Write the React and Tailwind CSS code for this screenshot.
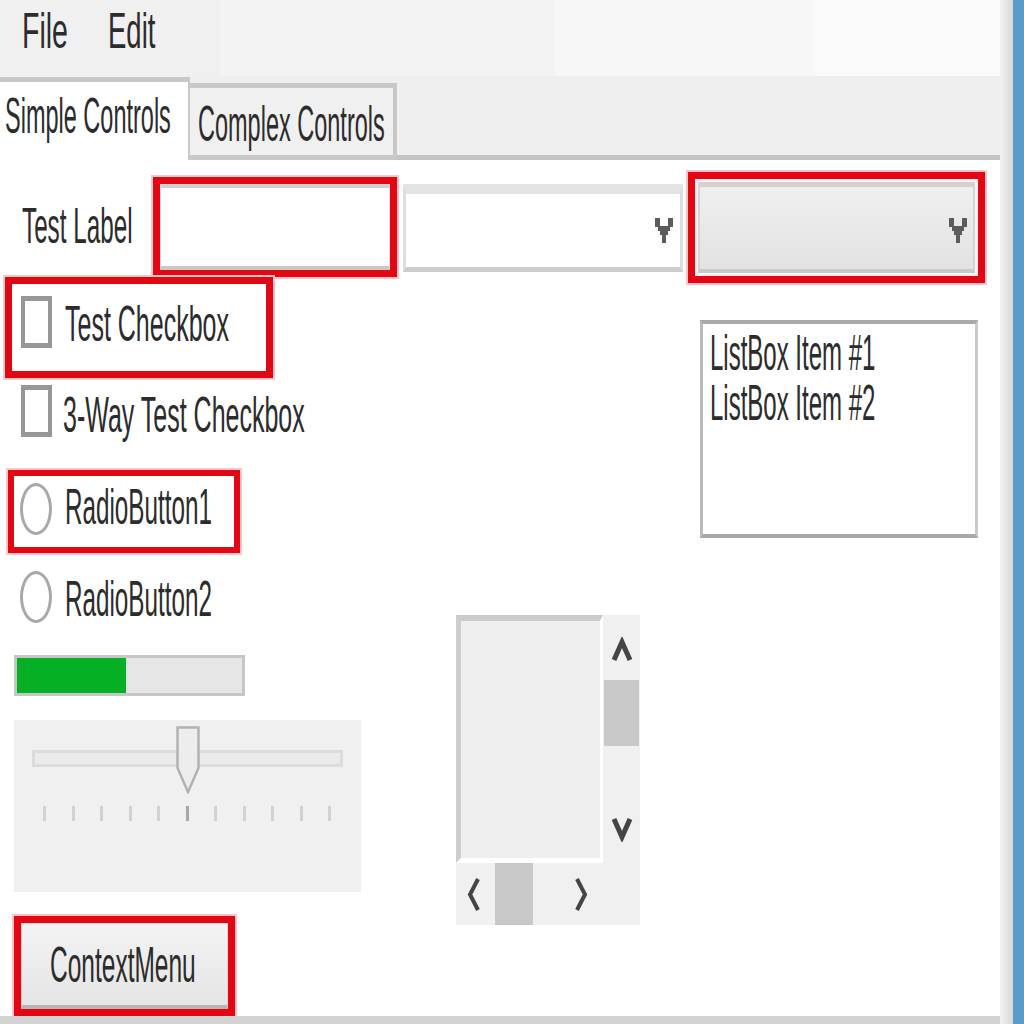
import React from 'react'

const FONT = { fontFamily: '"Liberation Sans", Arial, sans-serif' }

function Txt({ children, scale = 'scale-x-[0.49]' }) {
  return (
    <span className={`inline-block origin-left whitespace-nowrap text-[50px] leading-none text-[#2c2c2c] ${scale}`}>
      {children}
    </span>
  )
}

// blocky combo arrow, like the stretched winforms glyph
function Chev() {
  return (
    <svg width="18" height="25" viewBox="0 0 18 25" shapeRendering="crispEdges">
      <g fill="#5c5c5c">
        <rect x="0" y="0" width="5" height="9" />
        <rect x="13" y="0" width="5" height="9" />
        <rect x="3" y="8" width="12" height="5" />
        <rect x="5" y="13" width="8" height="4" />
        <rect x="7" y="17" width="4" height="8" />
      </g>
    </svg>
  )
}

function Arrow({ dir }) {
  if (dir === 'up' || dir === 'down') {
    return (
      <svg width="22" height="25" viewBox="0 0 22 25" className={dir === 'down' ? 'rotate-180' : ''}>
        <path d="M3 23 L11 5 L19 23" fill="none" stroke="#444" strokeWidth="5" />
      </svg>
    )
  }
  return (
    <svg width="13" height="35" viewBox="0 0 13 35" className={dir === 'right' ? 'rotate-180' : ''}>
      <path d="M11 2 L3 17.5 L11 33" fill="none" stroke="#444" strokeWidth="4" />
    </svg>
  )
}

function CheckBox() {
  return <div className="h-[52px] w-[31px] shrink-0 border-x-[4px] border-y-[5px] border-[#979797] bg-white" />
}

function Radio() {
  return <div className="h-[52px] w-[32px] shrink-0 rounded-[50%] border-[3px] border-[#a8a8a8] bg-white" />
}

export default function App() {
  const ticks = Array.from({ length: 11 }, (_, i) => i)

  return (
    <div className="flex h-[1024px] w-[1024px] overflow-hidden bg-white" style={FONT}>
      <div className="flex w-[1000px] shrink-0 flex-col">
        {/* menu */}
        <div className="flex h-[76px] shrink-0">
          <div className="flex w-[220px] bg-[#f0f0f0]">
            <div className="ml-[22px] mt-[6px] w-[86px]">
              <Txt scale="scale-x-[0.57]">File</Txt>
            </div>
            <div className="mt-[6px]">
              <Txt scale="scale-x-[0.55]">Edit</Txt>
            </div>
          </div>
          <div className="w-[335px] bg-[#f3f3f3]" />
          <div className="w-[260px] bg-[#f7f7f7]" />
          <div className="flex-1 bg-[#fafafa]" />
        </div>

        {/* tabs */}
        <div className="flex h-[84px] shrink-0 items-end bg-[#efefef]">
          <div className="h-[83px] w-[190px] shrink-0 border-t-[5px] border-r-[2px] border-[#c8c8c8] bg-white pl-[5px] pt-[9px]">
            <Txt scale="scale-x-[0.47]">Simple Controls</Txt>
          </div>
          <div className="h-[77px] w-[207px] shrink-0 border-t-[5px] border-r-[4px] border-b-[5px] border-[#c8c8c8] bg-[#f0f0f0] pl-[8px] pt-[11px]">
            <Txt scale="scale-x-[0.47]">Complex Controls</Txt>
          </div>
          <div className="flex-1 border-b-[5px] border-[#c4c4c4]" />
        </div>

        {/* tab page */}
        <div className="flex flex-1 flex-col bg-white pt-[12px]">
          <div className="flex h-[105px] shrink-0 items-start">
            <div className="ml-[22px] mt-[29px] w-[131px] shrink-0">
              <Txt scale="scale-x-[0.485]">Test Label</Txt>
            </div>
            <div className="mt-[5px] flex h-[100px] w-[244px] shrink-0 border-[7px] border-[#e30613] shadow-[0_0_0_2px_#f8c6c6]">
              <div className="flex-1 border-x border-t-[4px] border-b-[4px] border-x-[#dde0e4] border-t-[#cdd1d7] border-b-[#c8c8c8] bg-white" />
            </div>
            <div className="ml-[6px] mt-[12px] flex h-[88px] w-[280px] shrink-0 items-start justify-end border-x-[3px] border-t-[10px] border-b-[5px] border-x-[#dedede] border-t-[#e4e4e4] border-b-[#cdcdcd] bg-white pr-[7px] pt-[24px]">
              <Chev />
            </div>
            <div className="ml-[5px] flex h-[111px] w-[297px] shrink-0 border-[7px] border-[#e30613] bg-[#fdf2f2] p-[3px] shadow-[0_0_0_2px_#f8c6c6]">
              <div className="flex flex-1 items-start justify-end border-x-[2px] border-t-[5px] border-b-[4px] border-x-[#d4d4d4] border-t-[#d2d2d2] border-b-[#c9c9c9] bg-gradient-to-b from-[#efefef] to-[#e2e2e2] pr-[6px] pt-[31px]">
                <Chev />
              </div>
            </div>
          </div>

          <div className="flex flex-1 items-start">
            {/* left column */}
            <div className="ml-[5px] flex w-[357px] shrink-0 flex-col items-start">
              <div className="flex h-[101px] w-[268px] shrink-0 items-start border-[7px] border-[#e30613] pl-[9px] pt-[12px] shadow-[0_0_0_2px_#f8c6c6]">
                <CheckBox />
                <div className="ml-[13px] mt-[3px]">
                  <Txt scale="scale-x-[0.5]">Test Checkbox</Txt>
                </div>
              </div>
              <div className="ml-[16px] mt-[7px] flex items-start">
                <CheckBox />
                <div className="ml-[11px] mt-[5px]">
                  <Txt scale="scale-x-[0.5]">3-Way Test Checkbox</Txt>
                </div>
              </div>
              <div className="ml-[3px] mt-[30px] flex h-[83px] w-[232px] shrink-0 items-start border-[6px] border-[#e30613] pl-[6px] pt-[7px] shadow-[0_0_0_2px_#f8c6c6]">
                <Radio />
                <div className="ml-[13px] mt-[-1px]">
                  <Txt scale="scale-x-[0.485]">RadioButton1</Txt>
                </div>
              </div>
              <div className="ml-[15px] mt-[18px] flex items-start">
                <Radio />
                <div className="ml-[13px] mt-[3px]">
                  <Txt scale="scale-x-[0.485]">RadioButton2</Txt>
                </div>
              </div>
              <div className="ml-[9px] mt-[31px] flex h-[41px] w-[231px] shrink-0 border-[3px] border-[#c6c6c6] bg-[#e6e6e6]">
                <div className="w-[109px] bg-[#06b025]" />
              </div>
              <div className="ml-[9px] mt-[24px] h-[172px] w-[347px] shrink-0 bg-[#f0f0f0] pt-[30px]">
                <div className="relative ml-[18px] h-[17px] w-[311px] border-[3px] border-[#dcdcdc] bg-[#ebebeb]">
                  <svg className="absolute left-[141px] top-[-27px]" width="24" height="68" viewBox="0 0 24 68">
                    <path d="M1.5 1.5 H22.5 V42 L12 66 L1.5 42 Z" fill="#ededed" stroke="#b2b2b2" strokeWidth="2.5" />
                  </svg>
                </div>
                <div className="ml-[29px] mt-[39px] flex w-[288px] justify-between">
                  {ticks.map(i => (
                    <div key={i} className={`h-[15px] w-[3px] ${i === 5 ? 'bg-[#a8a8a8]' : 'bg-[#d2d2d2]'}`} />
                  ))}
                </div>
              </div>
              <div className="ml-[9px] mt-[24px] flex h-[100px] w-[221px] shrink-0 border-[7px] border-[#e30613] shadow-[0_0_0_2px_#f8c6c6]">
                <div className="min-w-0 flex-1 overflow-visible border-x border-t border-b-[4px] border-x-[#d6d6d6] border-t-[#dadada] border-b-[#b5b5b5] bg-gradient-to-b from-[#f3f3f3] to-[#e5e5e5] pl-[28px] pt-[16px]">
                  <Txt scale="scale-x-[0.49]">ContextMenu</Txt>
                </div>
              </div>
            </div>

            {/* scroll panel */}
            <div className="ml-[94px] mt-[338px] w-[184px] shrink-0">
              <div className="flex h-[248px]">
                <div className="w-[147px] border-t-[6px] border-l-[5px] border-r-[3px] border-b-[5px] border-t-[#cbcbcb] border-l-[#cecece] border-r-white border-b-white bg-[#efefef]" />
                <div className="flex w-[37px] flex-col items-center bg-[#f0f0f0] pt-[22px]">
                  <Arrow dir="up" />
                  <div className="mt-[18px] h-[66px] w-[35px] bg-[#c8c8c8]" />
                  <div className="mt-[71px]">
                    <Arrow dir="down" />
                  </div>
                </div>
              </div>
              <div className="flex h-[62px] items-center bg-[#f0f0f0]">
                <div className="ml-[11px]">
                  <Arrow dir="left" />
                </div>
                <div className="ml-[15px] w-[38px] self-stretch bg-[#c8c8c8]" />
                <div className="ml-[42px]">
                  <Arrow dir="right" />
                </div>
              </div>
            </div>

            {/* listbox */}
            <div className="ml-[60px] mt-[43px] h-[218px] w-[278px] shrink-0 border-y-[4px] border-l-[3px] border-r-[3px] border-y-[#a9a9a9] border-l-[#bbbbbb] border-r-[#c9c9c9] bg-white pl-[7px] pt-[4px]">
              <div className="h-[50px]">
                <Txt scale="scale-x-[0.48]">ListBox Item #1</Txt>
              </div>
              <div className="h-[50px]">
                <Txt scale="scale-x-[0.48]">ListBox Item #2</Txt>
              </div>
            </div>
          </div>
        </div>

        <div className="h-[12px] shrink-0 bg-[#d3d3d3]" />
      </div>
      <div className="w-[13px] shrink-0 bg-gradient-to-r from-[#f2f2f2] to-[#d8d8d8]" />
      <div className="w-[11px] shrink-0 bg-[#5b9bc9]" />
    </div>
  )
}
